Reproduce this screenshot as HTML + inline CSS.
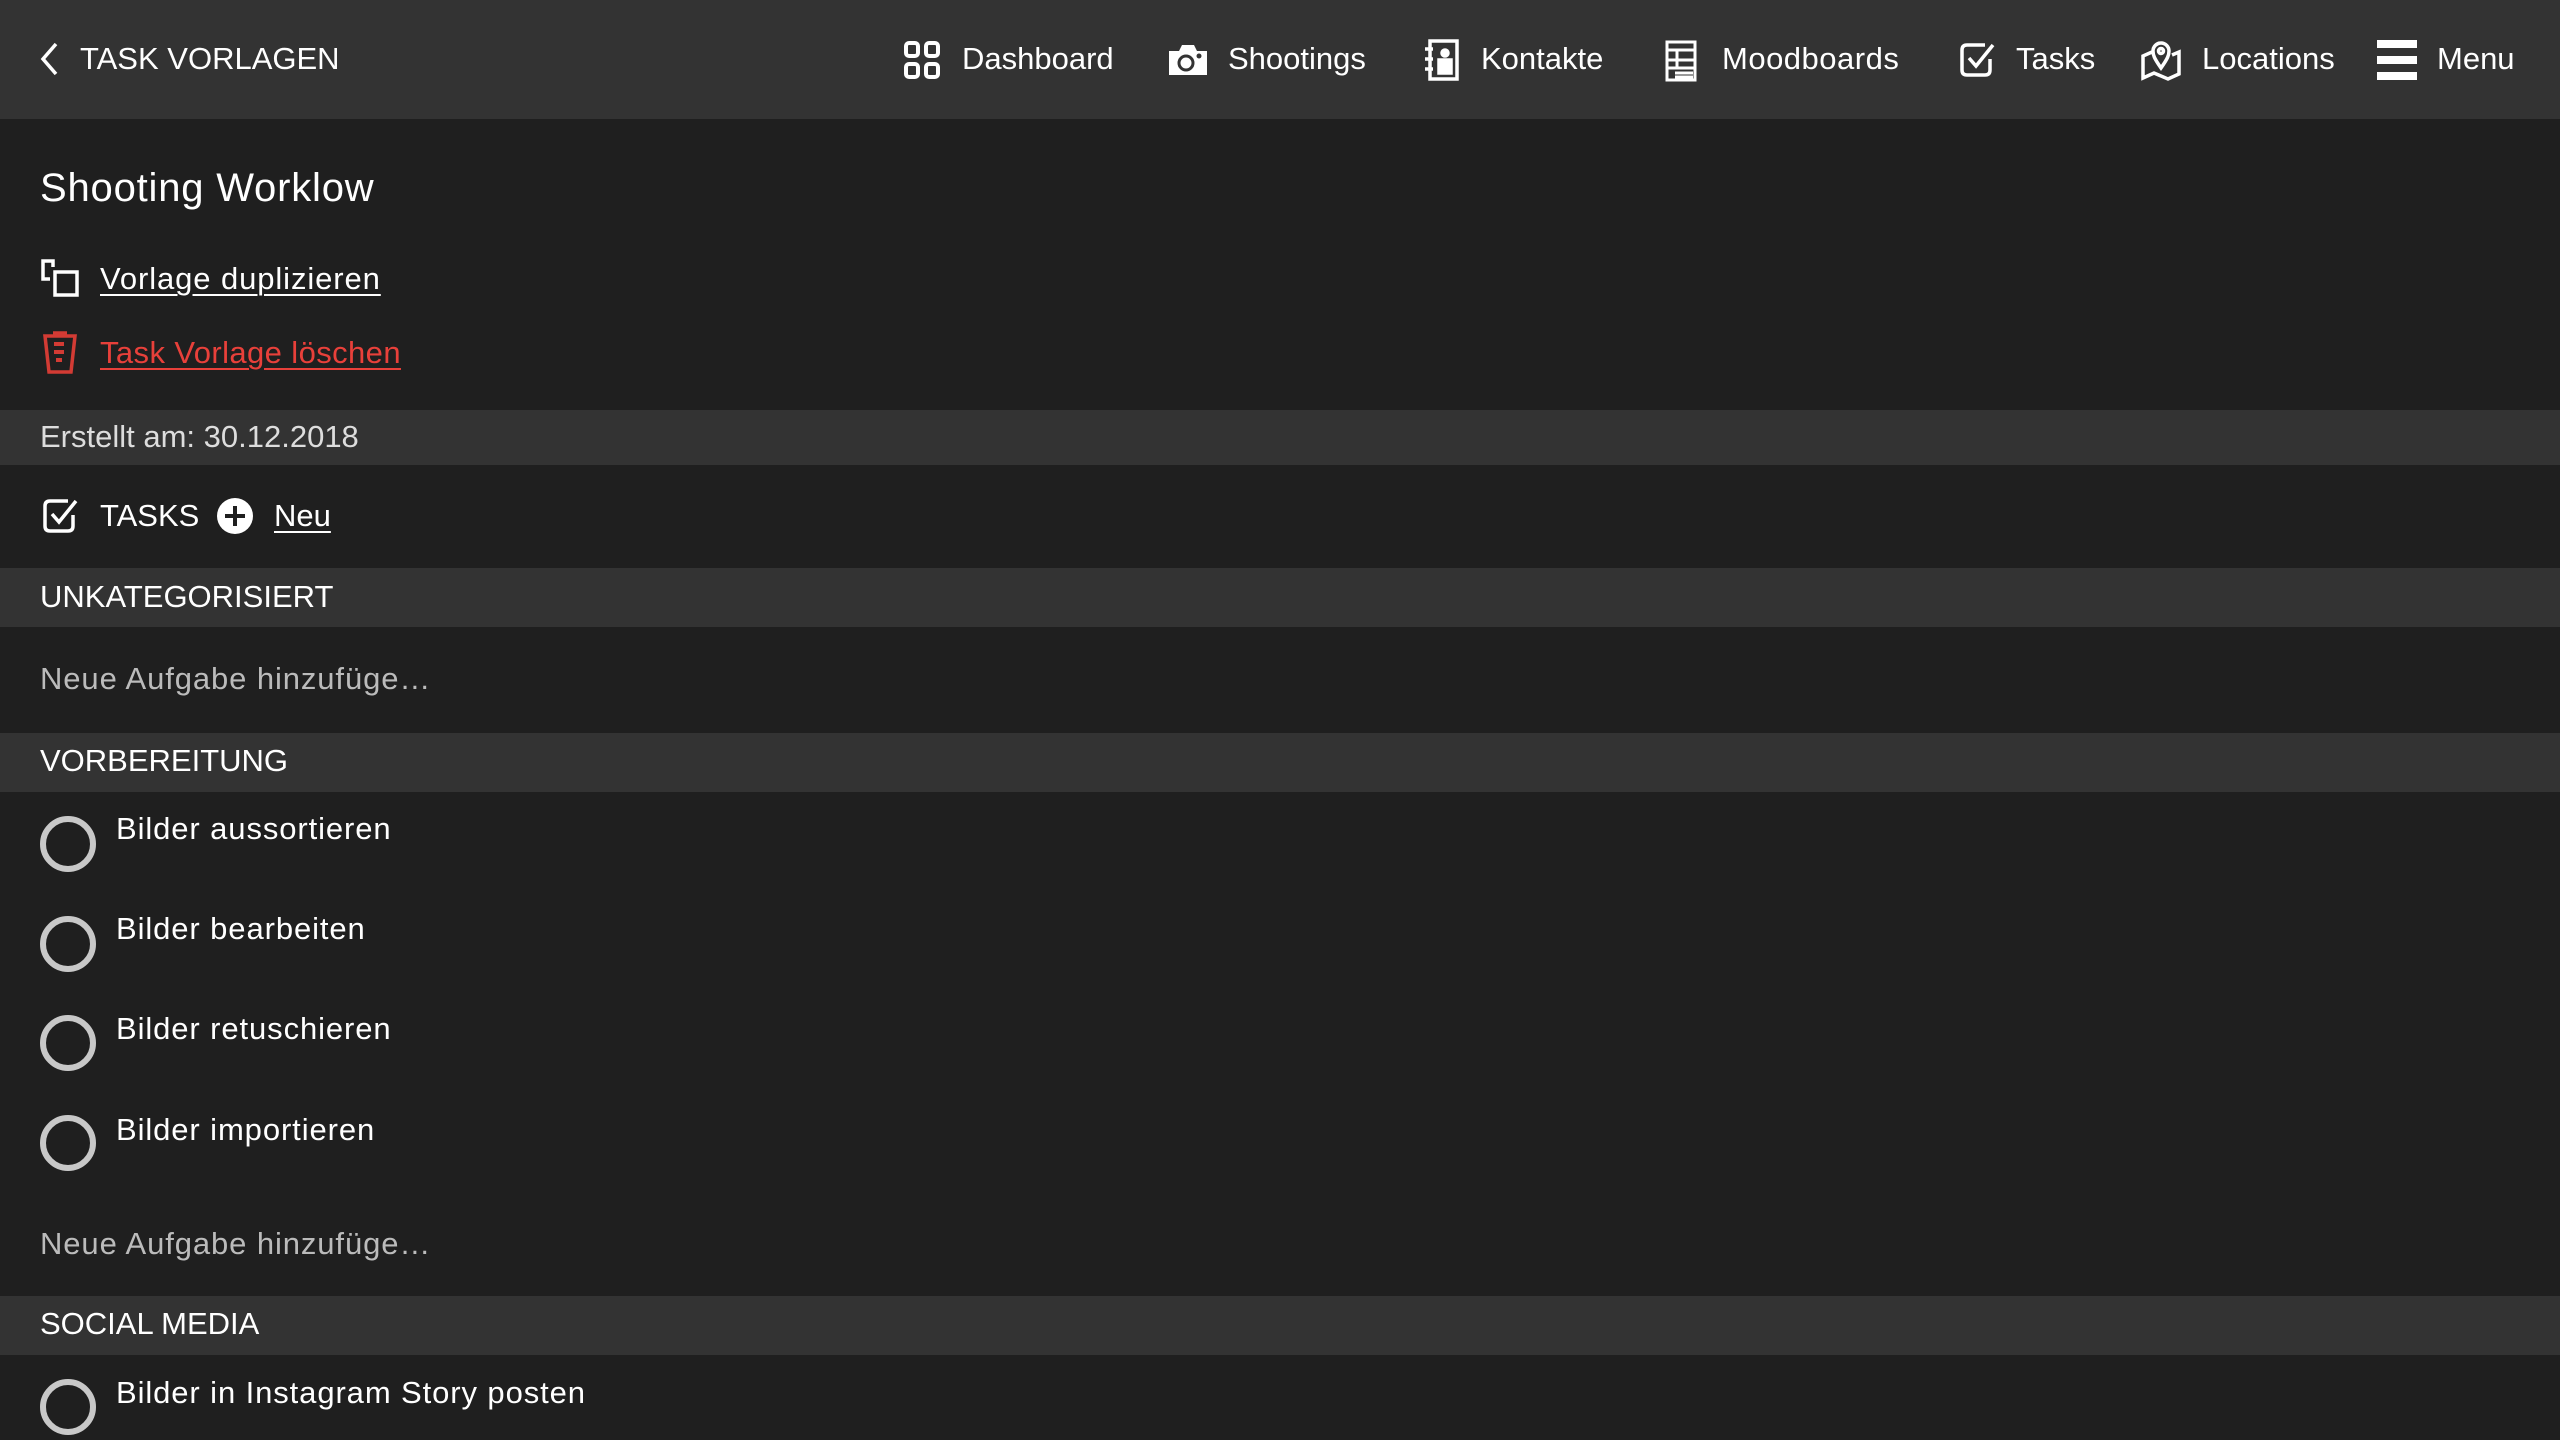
<!DOCTYPE html>
<html><head><meta charset="utf-8"><style>
*{margin:0;padding:0;box-sizing:border-box}
body{width:2560px;height:1440px;background:#1f1f1f;font-family:"Liberation Sans",sans-serif;color:#fff;position:relative;overflow:hidden}
.a{position:absolute;white-space:nowrap;line-height:50px;height:50px}
.hdr{position:absolute;left:0;top:0;width:2560px;height:119px;background:#333}
.band{position:absolute;left:0;width:2560px;background:#333}
svg{position:absolute}
.t{font-size:31px}
.ls{letter-spacing:0.9px}
.u{text-decoration:underline;text-underline-offset:5px;text-decoration-thickness:2px}
.c{position:absolute;left:40px;width:56px;height:56px;border:6px solid #c8c8c8;border-radius:50%}
</style></head><body>
<div class="hdr"></div>
<svg style="left:38px;top:42px" width="22" height="34" viewBox="0 0 22 34"><path d="M18 2 L5 17 L18 32" fill="none" stroke="#fff" stroke-width="3.5"/></svg>
<div class="a t" style="left:80px;top:34px">TASK VORLAGEN</div>

<svg style="left:903px;top:40px" width="38" height="40" viewBox="0 0 38 40" fill="none" stroke="#fff" stroke-width="4"><rect x="3" y="3" width="12" height="13" rx="3"/><rect x="23" y="3" width="12" height="13" rx="3"/><rect x="3" y="24" width="12" height="13" rx="3"/><rect x="23" y="24" width="12" height="13" rx="3"/></svg>
<div class="a t" style="left:962px;top:34px">Dashboard</div>
<svg style="left:1167px;top:43px" width="42" height="34" viewBox="0 0 42 34"><path d="M2 8 H12 L15 2 H27 L30 8 H40 V32 H2Z" fill="#fff"/><circle cx="19" cy="20" r="7" fill="none" stroke="#333" stroke-width="3"/><circle cx="32" cy="13" r="2.5" fill="#333"/></svg>
<div class="a t" style="left:1228px;top:34px">Shootings</div>
<svg style="left:1422px;top:39px" width="38" height="42" viewBox="0 0 38 42" fill="none" stroke="#fff" stroke-width="3.5"><rect x="8" y="2" width="27" height="38"/><path d="M3 10h8M3 20h8M3 30h8"/><circle cx="23" cy="14" r="3" fill="#fff"/><rect x="17" y="21" width="12" height="13" fill="#fff"/></svg>
<div class="a t" style="left:1481px;top:34px">Kontakte</div>
<svg style="left:1665px;top:40px" width="32" height="42" viewBox="0 0 32 42" fill="none" stroke="#fff" stroke-width="3"><rect x="2" y="2" width="28" height="38"/><path d="M2 10h28M12 10v18M2 20h28M2 28h28M10 33h18M10 37h18"/></svg>
<div class="a t" style="left:1722px;top:34px;letter-spacing:0.5px">Moodboards</div>
<svg style="left:1959px;top:41px" width="38" height="38" viewBox="0 0 38 38" fill="none" stroke="#fff" stroke-width="3.5"><path d="M26 4 H8 Q3 4 3 9 V29 Q3 34 8 34 H26 Q31 34 31 29 V18"/><path d="M10 17 L17 25 L34 4"/></svg>
<div class="a t" style="left:2016px;top:34px">Tasks</div>
<svg style="left:2140px;top:38px" width="42" height="44" viewBox="0 0 42 44" fill="none" stroke="#fff" stroke-width="3.5"><path d="M12 14 L3 18 V40 L14 35 L28 41 L39 36 V14 L32 17"/><path d="M21 30 C14 20 13 17 13 13 A8 8 0 0 1 29 13 C29 17 28 20 21 30Z"/><circle cx="21" cy="13" r="2.5"/></svg>
<div class="a t" style="left:2202px;top:34px">Locations</div>
<svg style="left:2377px;top:40px" width="40" height="40" viewBox="0 0 40 40" fill="#fff"><rect x="0" y="0" width="40" height="8"/><rect x="0" y="16" width="40" height="8"/><rect x="0" y="32" width="40" height="8"/></svg>
<div class="a t" style="left:2437px;top:34px">Menu</div>

<div class="a" style="left:40px;top:163px;font-size:40px;letter-spacing:0.8px">Shooting Worklow</div>

<svg style="left:41px;top:259px" width="38" height="38" viewBox="0 0 38 38" fill="none" stroke="#fff" stroke-width="3.5"><path d="M12 8 V2 H2 V20 H9"/><rect x="14" y="13" width="22" height="23"/></svg>
<div class="a t u ls" style="left:100px;top:254px">Vorlage duplizieren</div>

<svg style="left:42px;top:331px" width="36" height="44" viewBox="0 0 36 44" fill="none" stroke="#d33b34" stroke-width="3.5"><path d="M3 5 H33 L29 41 H7Z"/><path d="M11 2h14"/><path d="M12 13h10M12 21h10M14 29h6" stroke-width="4"/></svg>
<div class="a t u" style="left:100px;top:328px;color:#e8403a;letter-spacing:0.4px">Task Vorlage löschen</div>

<div class="band" style="top:410px;height:55px"></div>
<div class="a t" style="left:40px;top:412px;color:#ddd">Erstellt am: 30.12.2018</div>

<svg style="left:42px;top:497px" width="38" height="38" viewBox="0 0 38 38" fill="none" stroke="#fff" stroke-width="3.5"><path d="M26 4 H8 Q3 4 3 9 V29 Q3 34 8 34 H26 Q31 34 31 29 V18"/><path d="M10 17 L17 25 L34 4"/></svg>
<div class="a t" style="left:100px;top:491px">TASKS</div>
<svg style="left:216px;top:497px" width="38" height="38" viewBox="0 0 38 38"><circle cx="19" cy="19" r="18" fill="#fff"/><path d="M19 9v20M9 19h20" stroke="#1f1f1f" stroke-width="4"/></svg>
<div class="a t u" style="left:274px;top:491px">Neu</div>

<div class="band" style="top:568px;height:59px"></div>
<div class="a t" style="left:40px;top:572px">UNKATEGORISIERT</div>
<div class="a t ls" style="left:40px;top:654px;color:#bbb">Neue Aufgabe hinzufüge…</div>

<div class="band" style="top:733px;height:59px"></div>
<div class="a t" style="left:40px;top:736px">VORBEREITUNG</div>

<div class="c" style="top:816px"></div><div class="a t ls" style="left:116px;top:804px">Bilder aussortieren</div>
<div class="c" style="top:916px"></div><div class="a t ls" style="left:116px;top:904px">Bilder bearbeiten</div>
<div class="c" style="top:1015px"></div><div class="a t ls" style="left:116px;top:1004px">Bilder retuschieren</div>
<div class="c" style="top:1115px"></div><div class="a t ls" style="left:116px;top:1105px">Bilder importieren</div>
<div class="a t ls" style="left:40px;top:1219px;color:#bbb">Neue Aufgabe hinzufüge…</div>

<div class="band" style="top:1296px;height:59px"></div>
<div class="a t" style="left:40px;top:1299px">SOCIAL MEDIA</div>
<div class="c" style="top:1379px"></div><div class="a t ls" style="left:116px;top:1368px">Bilder in Instagram Story posten</div>
</body></html>
